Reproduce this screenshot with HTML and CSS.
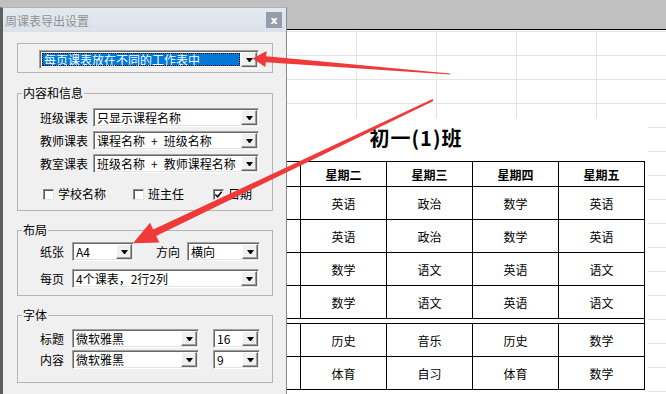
FILE: index.html
```html
<!doctype html>
<html lang="zh-CN">

<head>
    <meta charset="UTF-8" />
    <meta name="viewport" content="width=device-width, initial-scale=1.0" />
    <title>周课表导出设置</title>
    <link rel="stylesheet" href="styles.css">
</head>

<body>
    <div class="toolbar"></div>

    <div class="sheet">
        <div class="page">
            <h1 class="page-title">初一(1)班</h1>
            <table class="timetable">
                <colgroup>
                    <col class="col-no">
                    <col class="col-day" span="5">
                </colgroup>
                <thead>
                    <tr><th></th><th>星期一</th><th>星期二</th><th>星期三</th><th>星期四</th><th>星期五</th></tr>
                </thead>
                <tbody>
                    <tr><td>1</td><td>语文</td><td>英语</td><td>政治</td><td>数学</td><td>英语</td></tr>
                    <tr><td>2</td><td>语文</td><td>英语</td><td>政治</td><td>数学</td><td>英语</td></tr>
                    <tr><td>3</td><td>英语</td><td>数学</td><td>语文</td><td>英语</td><td>语文</td></tr>
                    <tr><td>4</td><td>英语</td><td>数学</td><td>语文</td><td>英语</td><td>语文</td></tr>
                    <tr class="split"><td colspan="6"></td></tr>
                    <tr><td>5</td><td>地理</td><td>历史</td><td>音乐</td><td>历史</td><td>数学</td></tr>
                    <tr><td>6</td><td>美术</td><td>体育</td><td>自习</td><td>体育</td><td>数学</td></tr>
                </tbody>
            </table>
        </div>
    </div>

    <div class="dialog">
        <div class="titlebar">
            <span class="title">周课表导出设置</span>
            <span class="close">x</span>
        </div>
        <div class="client">
            <fieldset class="group group-mode">
                <div class="combo combo-mode">
                    <span class="combo-text is-focused">每页课表放在不同的工作表中</span>
                    <span class="combo-btn"></span>
                </div>
            </fieldset>

            <fieldset class="group group-content">
                <legend>内容和信息</legend>
                <div class="field">
                    <label>班级课表</label>
                    <div class="combo combo-content"><span class="combo-text">只显示课程名称</span><span class="combo-btn"></span></div>
                </div>
                <div class="field">
                    <label>教师课表</label>
                    <div class="combo combo-content"><span class="combo-text">课程名称&ensp;+&ensp;班级名称</span><span class="combo-btn"></span></div>
                </div>
                <div class="field">
                    <label>教室课表</label>
                    <div class="combo combo-content"><span class="combo-text">班级名称&ensp;+&ensp;教师课程名称</span><span class="combo-btn"></span></div>
                </div>
                <div class="checks">
                    <label class="check"><span class="box"></span>学校名称</label>
                    <label class="check"><span class="box"></span>班主任</label>
                    <label class="check"><span class="box"><svg viewBox="0 0 10 10" width="9" height="9"><path d="M1.5 5 L4 7.5 L8.5 2" fill="none" stroke="#000" stroke-width="1.7"/></svg></span>日期</label>
                </div>
            </fieldset>

            <fieldset class="group group-layout">
                <legend>布局</legend>
                <div class="field field-short">
                    <label>纸张</label>
                    <div class="combo combo-paper"><span class="combo-text">A4</span><span class="combo-btn"></span></div>
                    <label class="label-dir">方向</label>
                    <div class="combo combo-dir"><span class="combo-text">横向</span><span class="combo-btn"></span></div>
                </div>
                <div class="field field-short">
                    <label>每页</label>
                    <div class="combo combo-per-page"><span class="combo-text">4个课表，2行2列</span><span class="combo-btn"></span></div>
                </div>
            </fieldset>

            <fieldset class="group group-font">
                <legend>字体</legend>
                <div class="field field-short">
                    <label>标题</label>
                    <div class="combo combo-face"><span class="combo-text">微软雅黑</span><span class="combo-btn"></span></div>
                    <div class="combo combo-size"><span class="combo-text">16</span><span class="combo-btn"></span></div>
                </div>
                <div class="field field-short">
                    <label>内容</label>
                    <div class="combo combo-face"><span class="combo-text">微软雅黑</span><span class="combo-btn"></span></div>
                    <div class="combo combo-size"><span class="combo-text">9</span><span class="combo-btn"></span></div>
                </div>
            </fieldset>
        </div>
    </div>

    <!-- annotation arrows drawn over the screenshot -->
    <svg class="arrows" width="666" height="394" viewBox="0 0 666 394">
        <polygon points="450,73.5 266.2,56.2 266.6,51 252.5,58.5 265.4,67 265.8,62.2 450,74.6" />
        <polygon points="433.4,100.9 156.2,235.9 159.4,242.6 133,243.3 150,222.8 153.2,229.5 432.6,99.1" />
    </svg>
</body>

</html>
```

FILE: styles.css
```css
* {
    box-sizing: border-box;
}

body {
    margin: 0;
    width: 666px;
    height: 394px;
    overflow: hidden;
    position: relative;
    display: flex;
    flex-direction: column;
    background: #fff;
    font-family: "Noto Sans CJK SC", sans-serif;
}

.toolbar {
    flex: none;
    height: 30px;
    background: #c0c0c0;
    border-bottom: 1px solid #000;
}

/* spreadsheet with light cell grid */
.sheet {
    flex: 1;
    display: flex;
    flex-direction: column;
    background-color: #fff;
    background-image:
        linear-gradient(#e4e4e4 1px, transparent 1px),
        linear-gradient(90deg, #e4e4e4 1px, transparent 1px);
    background-size: 80px 24px;
    background-position: 36px 1px;
}

.page {
    flex: 1;
    margin: 88px 0 0 188px;
    width: 460px;
    padding-top: 6px;
    background: #fff;
}

.page-title {
    width: 456px;
    margin: 0 0 9px;
    text-align: center;
    font-size: 20px;
    line-height: 28px;
    font-weight: bold;
    letter-spacing: 1px;
}

.timetable {
    width: 456px;
    border-collapse: collapse;
    table-layout: fixed;
    font-size: 12px;
}

.timetable .col-no {
    width: 26px;
}

.timetable .col-day {
    width: 86px;
}

.timetable th,
.timetable td {
    border: 1px solid #000;
    text-align: center;
    padding: 0;
}

.timetable th {
    height: 25px;
    font-weight: bold;
}

.timetable td {
    height: 33px;
}

.timetable .split td {
    height: 5px;
}

/* dialog window */
.dialog {
    position: absolute;
    left: 0;
    top: 7px;
    width: 287px;
    height: 400px;
    background: #f0f0f0;
    border-left: 3px solid #5f5f5f;
    border-right: 1px solid #8a8a8a;
    border-top: 1px solid #aab4be;
    font-size: 12px;
    color: #000;
}

.titlebar {
    height: 24px;
    display: flex;
    align-items: center;
    justify-content: space-between;
    padding: 0 4px 0 2px;
    background: linear-gradient(#e4e9ef, #dbe2ea);
}

.title {
    color: #929292;
    font-size: 12px;
}

.close {
    width: 16px;
    height: 16px;
    display: flex;
    align-items: center;
    justify-content: center;
    background: #939ea9;
    color: #fff;
    font: bold 11px "DejaVu Sans", sans-serif;
}

.client {
    display: flex;
    flex-direction: column;
    padding: 11px 13px 0 14px;
}

.group {
    margin: 0;
    padding: 0;
    min-width: 0;
    border: 1px solid #b4b4b4;
}

.group legend {
    margin-left: 4px;
    padding: 0 1px;
    font-size: 12px;
    line-height: 16px;
}

.group-mode {
    padding: 6px 0 3px 21px;
}

.group-content {
    margin-top: 12px;
    padding: 7px 0 8px;
}

.group-layout {
    margin-top: 11px;
    padding: 4px 0 7px;
}

.group-font {
    margin-top: 11px;
    padding: 6px 0 13px;
}

.field {
    display: flex;
    align-items: center;
    gap: 5px;
    padding-left: 22px;
}

.group-content .field + .field {
    margin-top: 4px;
}

.field-short {
    gap: 8px;
}

.group-layout .field + .field {
    margin-top: 8px;
}

.group-font .field + .field {
    margin-top: 2px;
}

.label-dir {
    margin-left: 14px;
    margin-right: -1px;
}

/* classic combo box */
.combo {
    display: flex;
    height: 19px;
    padding: 1px;
    background: #fff;
    border: 1px solid;
    border-color: #a0a0a0 #fff #fff #a0a0a0;
    box-shadow: inset 1px 1px #696969, inset -1px -1px #e3e3e3;
}

.combo-text {
    flex: 1;
    min-width: 0;
    padding-left: 2px;
    line-height: 15px;
    white-space: pre;
    overflow: hidden;
}

.combo-text.is-focused {
    margin: 1px;
    line-height: 13px;
    overflow: visible;
    background: #0078d7;
    color: #fff;
    outline: 1px dotted #000;
    outline-offset: -1px;
}

.combo-btn {
    flex: none;
    width: 16px;
    display: flex;
    align-items: center;
    justify-content: center;
    background: #f0f0f0;
    border: 1px solid;
    border-color: #fff #696969 #696969 #fff;
    box-shadow: inset -1px -1px #a0a0a0;
}

.combo-btn::after {
    content: "";
    width: 1px;
    border-left: 3px solid transparent;
    border-right: 3px solid transparent;
    border-top: 4px solid #000;
}

.combo-mode {
    width: 220px;
}

.combo-content {
    width: 166px;
}

.combo-paper {
    width: 62px;
}

.combo-dir {
    width: 73px;
}

.combo-per-page {
    width: 187px;
}

.combo-face {
    width: 127px;
}

.combo-size {
    width: 47px;
    margin-left: 6px;
}

/* check boxes */
.checks {
    display: grid;
    grid-template-columns: 90px 80px auto;
    margin-top: 13px;
    padding-left: 25px;
    height: 16px;
    align-items: center;
}

.check {
    display: flex;
    align-items: center;
    gap: 4px;
    line-height: 16px;
}

.box {
    flex: none;
    width: 11px;
    height: 11px;
    display: flex;
    align-items: center;
    justify-content: center;
    background: #fff;
    border: 1px solid;
    border-color: #8a8a8a #e3e3e3 #e3e3e3 #8a8a8a;
    box-shadow: inset 1px 1px #5a5a5a;
}

.box svg {
    flex: none;
}

.arrows {
    position: absolute;
    left: 0;
    top: 0;
    pointer-events: none;
    fill: #f03a3a;
}
```
